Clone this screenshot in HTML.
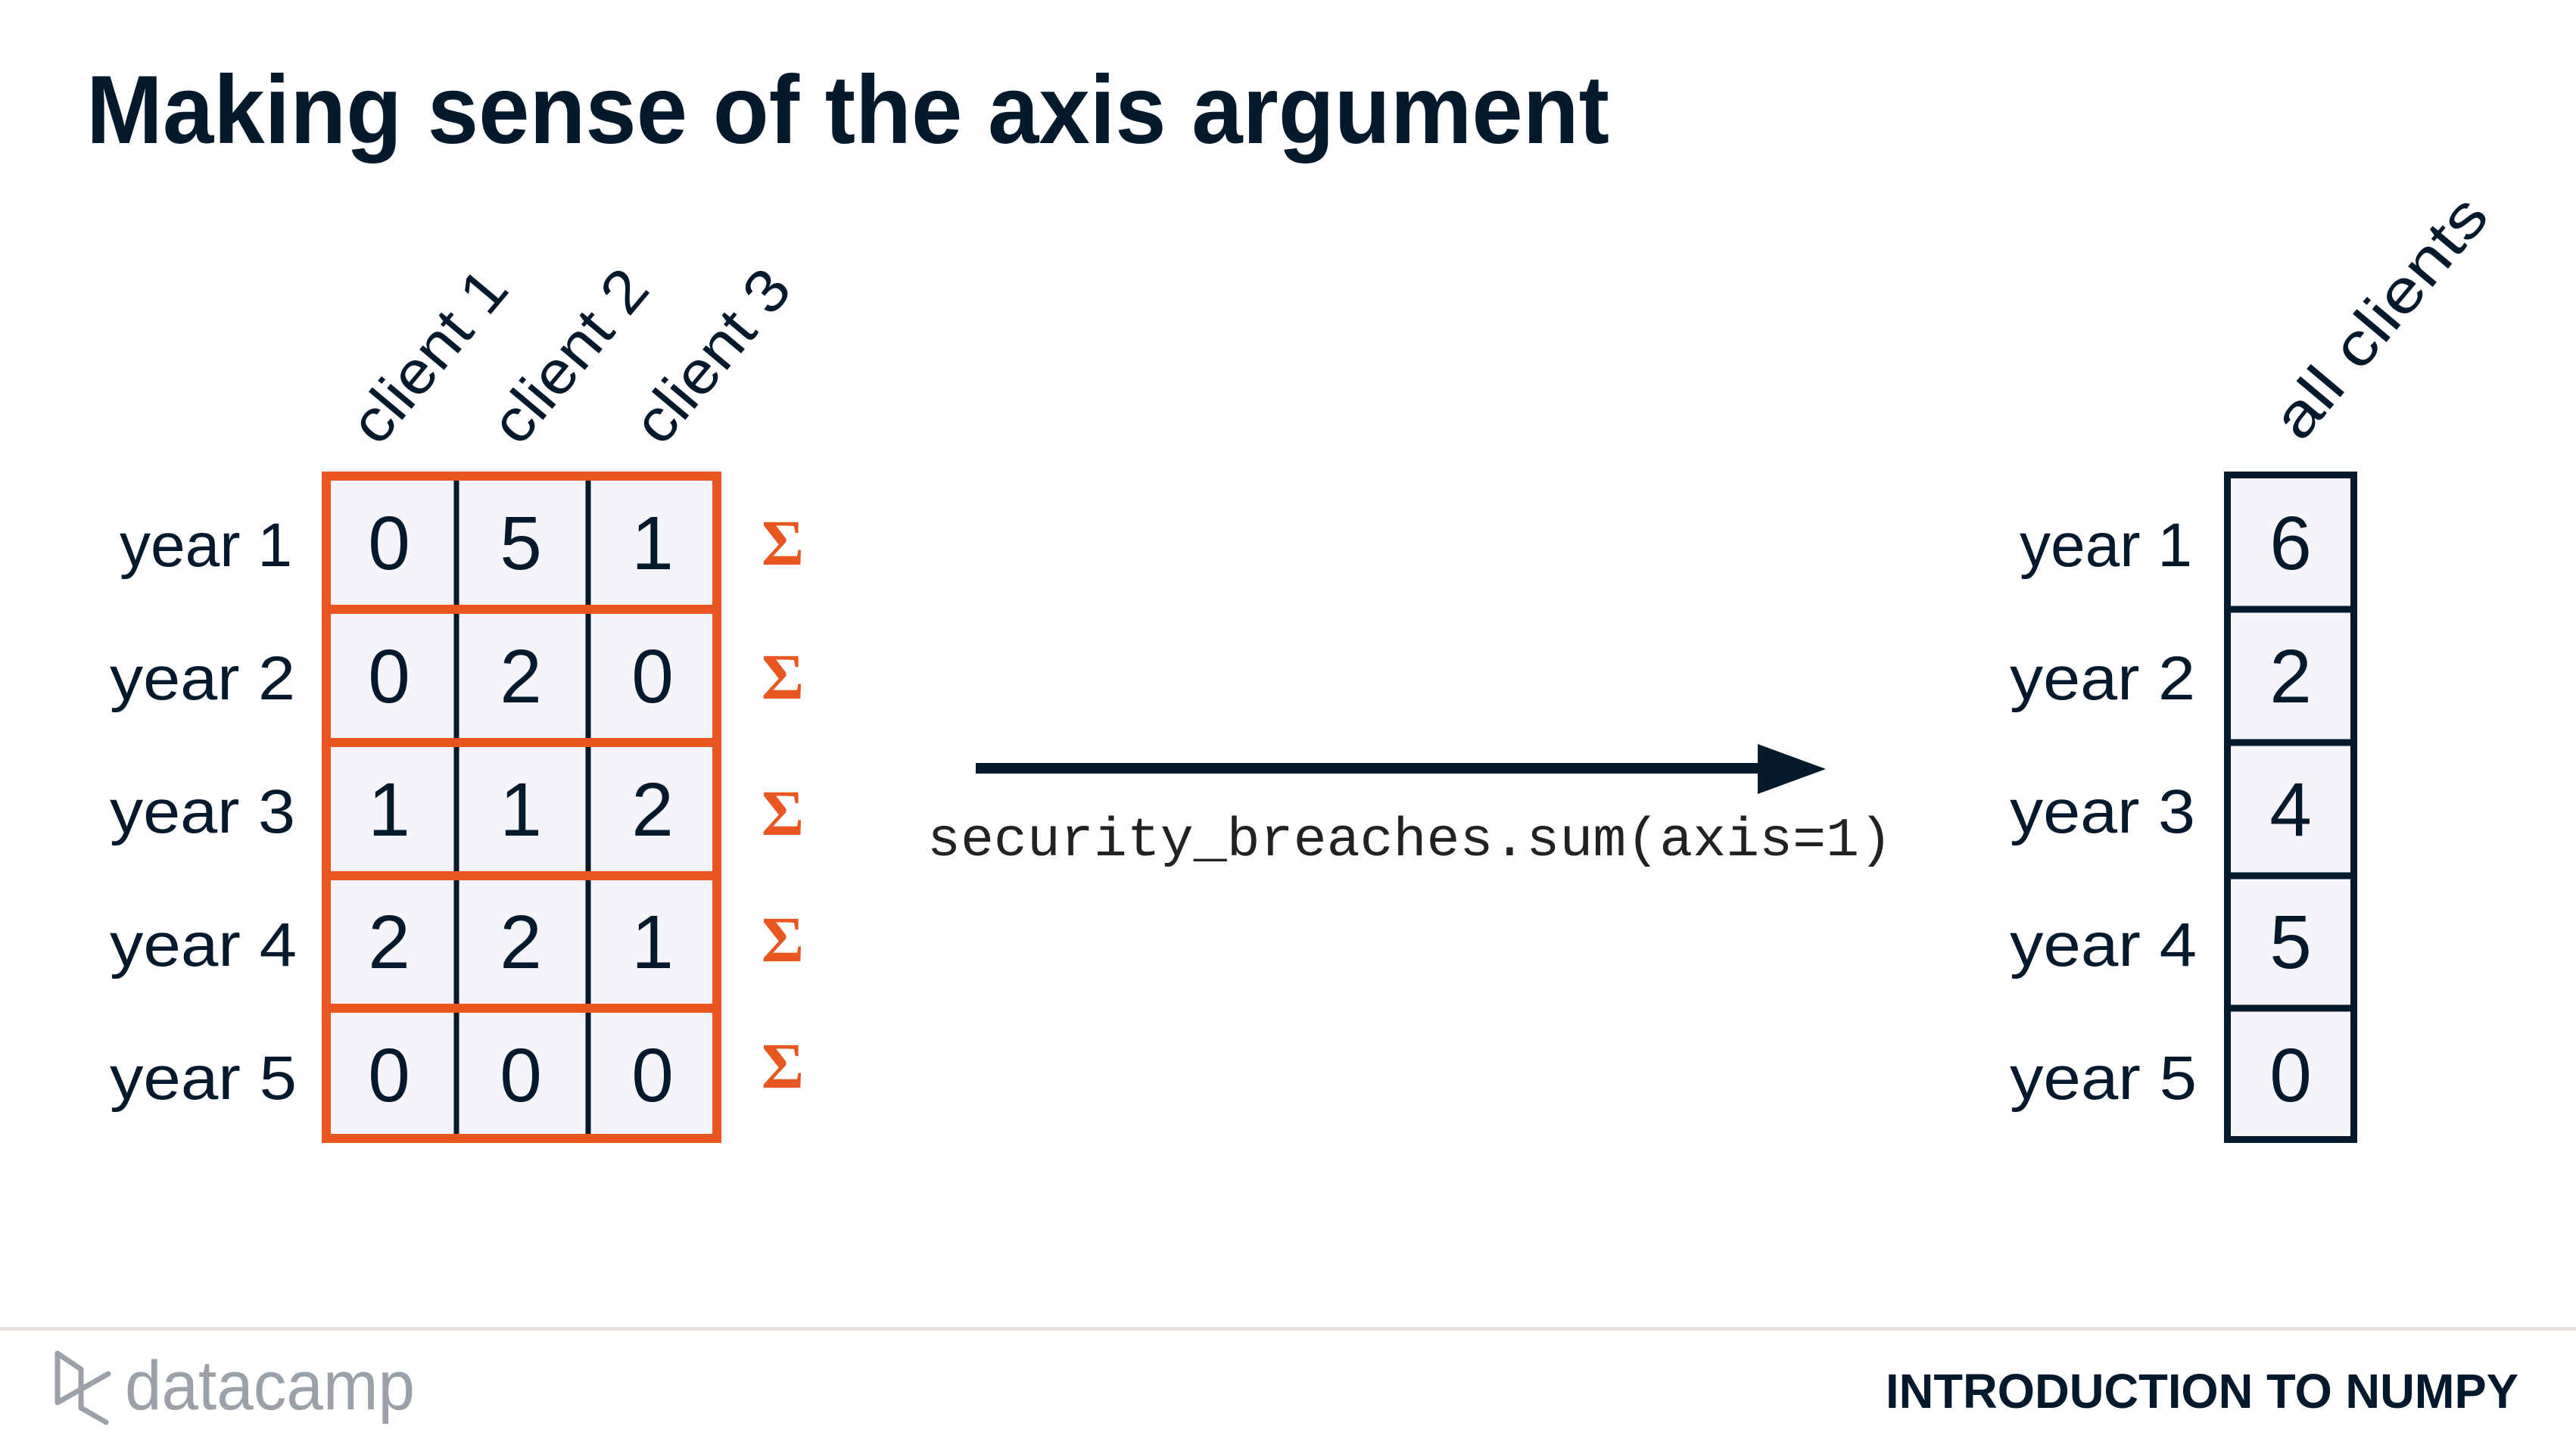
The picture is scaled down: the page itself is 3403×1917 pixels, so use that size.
<!DOCTYPE html>
<html><head><meta charset="utf-8"><style>
html,body{margin:0;padding:0;background:#fff;width:3403px;height:1917px;overflow:hidden}
svg{display:block}
.s{font-family:"Liberation Sans",sans-serif;fill:#05192d}
</style></head><body>
<svg width="3403" height="1917" viewBox="0 0 3403 1917" xmlns="http://www.w3.org/2000/svg">
<text class="s" x="114" y="189" font-size="128" font-weight="bold" textLength="2012" lengthAdjust="spacingAndGlyphs">Making sense of the axis argument</text>

<!-- left grid -->
<rect x="425" y="623" width="528" height="887" fill="#f4f4f9"/>
<g stroke="#05192d" stroke-width="7">
<line x1="603" y1="623" x2="603" y2="1510"/><line x1="777" y1="623" x2="777" y2="1510"/>
</g>
<g stroke="#e9561f" stroke-width="12" fill="none">
<rect x="431" y="629" width="516" height="875"/>
<line x1="425" y1="805" x2="953" y2="805"/><line x1="425" y1="981" x2="953" y2="981"/>
<line x1="425" y1="1157" x2="953" y2="1157"/><line x1="425" y1="1332" x2="953" y2="1332"/>
</g>
<g class="s" font-size="100" text-anchor="middle">
<text x="514" y="752">0</text><text x="688" y="752">5</text><text x="862" y="752">1</text>
<text x="514" y="928">0</text><text x="688" y="928">2</text><text x="862" y="928">0</text>
<text x="514" y="1104">1</text><text x="688" y="1104">1</text><text x="862" y="1104">2</text>
<text x="514" y="1279">2</text><text x="688" y="1279">2</text><text x="862" y="1279">1</text>
<text x="514" y="1455">0</text><text x="688" y="1455">0</text><text x="862" y="1455">0</text>
</g>
<g class="s" font-size="82" text-anchor="end">
<text x="386" y="748" textLength="228" lengthAdjust="spacingAndGlyphs">year 1</text><text x="390" y="924" textLength="245" lengthAdjust="spacingAndGlyphs">year 2</text><text x="390" y="1100" textLength="245" lengthAdjust="spacingAndGlyphs">year 3</text>
<text x="392" y="1276" textLength="247" lengthAdjust="spacingAndGlyphs">year 4</text><text x="392" y="1452" textLength="247" lengthAdjust="spacingAndGlyphs">year 5</text>
</g>
<g font-family="Liberation Serif,serif" font-weight="bold" font-size="86" fill="#e9561f" text-anchor="middle">
<text x="1034" y="746">Σ</text><text x="1034" y="923">Σ</text><text x="1034" y="1103">Σ</text>
<text x="1034" y="1270">Σ</text><text x="1034" y="1437">Σ</text>
</g>
<g class="s" font-size="80">
<text transform="translate(500,592) rotate(-50)" textLength="272" lengthAdjust="spacingAndGlyphs">client 1</text>
<text transform="translate(686,592) rotate(-50)" textLength="272" lengthAdjust="spacingAndGlyphs">client 2</text>
<text transform="translate(874,592) rotate(-50)" textLength="272" lengthAdjust="spacingAndGlyphs">client 3</text>
<text transform="translate(3040,586) rotate(-50)" textLength="390" lengthAdjust="spacingAndGlyphs">all clients</text>
</g>

<!-- arrow -->
<rect x="1289" y="1008" width="1040" height="14" fill="#05192d"/>
<polygon points="2322,983 2412,1016 2322,1049" fill="#05192d"/>
<text x="1225" y="1130" font-family="Liberation Mono,monospace" font-size="72" fill="#222" textLength="1275" lengthAdjust="spacingAndGlyphs">security_breaches.sum(axis=1)</text>

<!-- right column -->
<rect x="2938" y="623" width="176" height="887" fill="#f4f4f9"/>
<g stroke="#05192d" stroke-width="9" fill="none">
<rect x="2942.5" y="627.5" width="167" height="878"/>
<line x1="2938" y1="805" x2="3114" y2="805"/><line x1="2938" y1="981" x2="3114" y2="981"/>
<line x1="2938" y1="1157" x2="3114" y2="1157"/><line x1="2938" y1="1332" x2="3114" y2="1332"/>
</g>
<g class="s" font-size="100" text-anchor="middle">
<text x="3026" y="752">6</text><text x="3026" y="928">2</text><text x="3026" y="1104">4</text>
<text x="3026" y="1279">5</text><text x="3026" y="1455">0</text>
</g>
<g class="s" font-size="82" text-anchor="end">
<text x="2896" y="748" textLength="228" lengthAdjust="spacingAndGlyphs">year 1</text><text x="2900" y="924" textLength="245" lengthAdjust="spacingAndGlyphs">year 2</text><text x="2900" y="1100" textLength="245" lengthAdjust="spacingAndGlyphs">year 3</text>
<text x="2902" y="1276" textLength="247" lengthAdjust="spacingAndGlyphs">year 4</text><text x="2902" y="1452" textLength="247" lengthAdjust="spacingAndGlyphs">year 5</text>
</g>

<!-- footer -->
<rect x="0" y="1753" width="3403" height="5" fill="#e5e1dc"/>
<g fill="none" stroke="#9aa1a8" stroke-width="7" stroke-linejoin="round" stroke-linecap="round">
<path d="M107,1809 L76,1788 L76,1853 L143,1815"/>
<path d="M107,1809 L107,1860 L140,1879"/>
</g>
<text x="165" y="1862" font-family="Liberation Sans,sans-serif" font-size="92" fill="#9aa1a8" textLength="383" lengthAdjust="spacingAndGlyphs">datacamp</text>
<text x="2491" y="1860" class="s" font-size="64" font-weight="bold" textLength="836" lengthAdjust="spacingAndGlyphs">INTRODUCTION TO NUMPY</text>
</svg>
</body></html>
